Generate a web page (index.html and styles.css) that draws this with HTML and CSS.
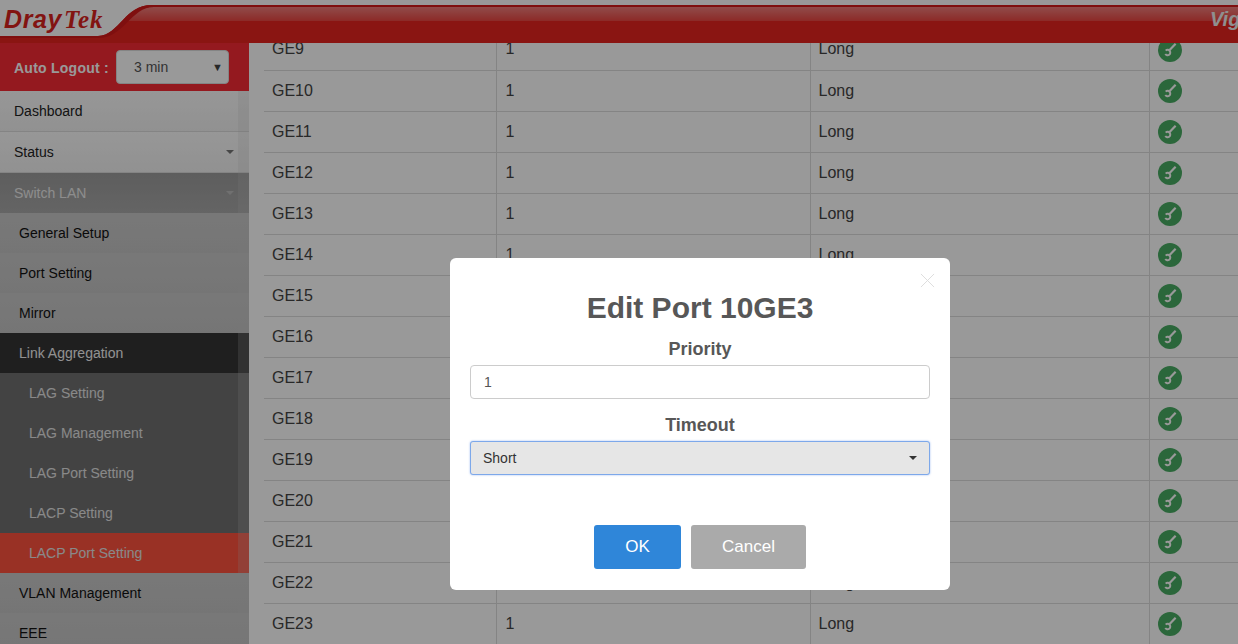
FILE: index.html
```html
<!DOCTYPE html>
<html lang="en">
<head>
<meta charset="utf-8">
<title>DrayTek Vigor</title>
<link rel="stylesheet" href="styles.css">
</head>
<body>
<svg class="defs" width="0" height="0" aria-hidden="true">
  <symbol id="wrench" viewBox="0 0 24 24">
    <circle cx="12" cy="12" r="12" fill="#49ac63"/>
    <path d="M17.600 5.800L11.400 12.200" stroke="#fff" stroke-width="2.200" fill="none"/>
    <path d="M7.700 12.600A2.700 2.700 0 1 1 7.300 16" stroke="#fff" stroke-width="2" fill="none"/>
  </symbol>
</svg>
<div class="app">
  <header class="topbar">
    <svg class="swoosh" viewBox="0 0 1238 43" preserveAspectRatio="none" aria-hidden="true">
      <defs>
        <linearGradient id="gloss" x1="0" y1="0" x2="0" y2="1">
          <stop offset="0" stop-color="#fff" stop-opacity=".42"/>
          <stop offset="1" stop-color="#fff" stop-opacity=".16"/>
        </linearGradient>
      </defs>
      <path d="M0 36H98C120 35 124 5 152 5H1238V43H0Z" fill="#e6231e"/>
      <path d="M126 21C134 14 140 7 154 7H1238V21Z" fill="url(#gloss)"/>
      <path d="M0 36H98C120 35 124 5 152 5H1238V7H154C131 7 124 38 98 38H0Z" fill="#d41a1a"/>
    </svg>
    <div class="logo"><span class="logo-dray">Dray</span><span class="logo-tek">Tek</span></div>
    <div class="model">Vig</div>
  </header>
  <div class="body">
    <nav class="sidebar">
      <div class="logout">
        <span class="logout-label">Auto Logout :</span>
        <div class="logout-select">
          <span>3 min</span>
          <span class="logout-arrow">▼</span>
        </div>
      </div>
      <div class="menu">
        <div class="menu-track"></div>
        <a class="item item-top">Dashboard</a>
        <a class="item item-top">Status<i class="caret"></i></a>
        <a class="item item-open">Switch LAN<i class="caret"></i></a>
        <a class="item item-sub">General Setup</a>
        <a class="item item-sub">Port Setting</a>
        <a class="item item-sub">Mirror</a>
        <a class="item item-sub item-group">Link Aggregation</a>
        <a class="item item-leaf">LAG Setting</a>
        <a class="item item-leaf">LAG Management</a>
        <a class="item item-leaf">LAG Port Setting</a>
        <a class="item item-leaf">LACP Setting</a>
        <a class="item item-leaf item-active">LACP Port Setting</a>
        <a class="item item-sub">VLAN Management</a>
        <a class="item item-sub">EEE</a>
      </div>
    </nav>
    <main class="content">
      <table class="ports">
        <colgroup>
          <col class="col-port"><col class="col-prio"><col class="col-time"><col class="col-edit">
        </colgroup>
        <tbody>
          <tr><td>GE9</td><td>1</td><td>Long</td><td><svg class="edit"><use href="#wrench"/></svg></td></tr>
          <tr><td>GE10</td><td>1</td><td>Long</td><td><svg class="edit"><use href="#wrench"/></svg></td></tr>
          <tr><td>GE11</td><td>1</td><td>Long</td><td><svg class="edit"><use href="#wrench"/></svg></td></tr>
          <tr><td>GE12</td><td>1</td><td>Long</td><td><svg class="edit"><use href="#wrench"/></svg></td></tr>
          <tr><td>GE13</td><td>1</td><td>Long</td><td><svg class="edit"><use href="#wrench"/></svg></td></tr>
          <tr><td>GE14</td><td>1</td><td>Long</td><td><svg class="edit"><use href="#wrench"/></svg></td></tr>
          <tr><td>GE15</td><td>1</td><td>Long</td><td><svg class="edit"><use href="#wrench"/></svg></td></tr>
          <tr><td>GE16</td><td>1</td><td>Long</td><td><svg class="edit"><use href="#wrench"/></svg></td></tr>
          <tr><td>GE17</td><td>1</td><td>Long</td><td><svg class="edit"><use href="#wrench"/></svg></td></tr>
          <tr><td>GE18</td><td>1</td><td>Long</td><td><svg class="edit"><use href="#wrench"/></svg></td></tr>
          <tr><td>GE19</td><td>1</td><td>Long</td><td><svg class="edit"><use href="#wrench"/></svg></td></tr>
          <tr><td>GE20</td><td>1</td><td>Long</td><td><svg class="edit"><use href="#wrench"/></svg></td></tr>
          <tr><td>GE21</td><td>1</td><td>Long</td><td><svg class="edit"><use href="#wrench"/></svg></td></tr>
          <tr><td>GE22</td><td>1</td><td>Long</td><td><svg class="edit"><use href="#wrench"/></svg></td></tr>
          <tr><td>GE23</td><td>1</td><td>Long</td><td><svg class="edit"><use href="#wrench"/></svg></td></tr>
        </tbody>
      </table>
    </main>
  </div>
</div>
<div class="overlay"></div>
<section class="modal">
  <svg class="modal-close" viewBox="0 0 16 16" aria-hidden="true"><path d="M1 1l14 14M15 1L1 15" stroke="#dcdcdc" stroke-width="1" fill="none"/></svg>
  <h2 class="modal-title">Edit Port 10GE3</h2>
  <label class="field-label" for="prio">Priority</label>
  <input class="field-input" id="prio" type="text" value="1">
  <label class="field-label field-label-second" for="timeout">Timeout</label>
  <div class="select-wrap">
    <select class="field-select" id="timeout">
      <option>Short</option>
      <option>Long</option>
    </select>
    <i class="select-caret"></i>
  </div>
  <div class="modal-actions">
    <button class="btn btn-ok" type="button">OK</button>
    <button class="btn btn-cancel" type="button">Cancel</button>
  </div>
</section>
</body>
</html>
```
FILE: styles.css
```css
* { box-sizing: border-box; }
html, body { margin: 0; height: 100%; overflow: hidden; }
body { font-family: "Liberation Sans", Arial, sans-serif; font-size: 14px; color: #333; background: #fff; }
.defs { position: absolute; }
.app { display: flex; flex-direction: column; height: 644px; }

.topbar { position: relative; display: flex; align-items: flex-start; flex: none; height: 43px; overflow: hidden; }
.swoosh { position: absolute; inset: 0; width: 100%; height: 43px; display: block; }
.logo { position: relative; padding: 5px 0 0 4px; font-size: 25px; line-height: 28px; color: #d9221d; font-style: italic; font-family: "Liberation Sans", sans-serif; white-space: nowrap; }
.logo-dray { font-weight: 700; letter-spacing: .6px; }
.logo-tek { font-family: "Liberation Serif", serif; font-weight: 700; margin-left: 2px; font-size: 25px; letter-spacing: 1px; }
.model { position: relative; flex: none; margin-left: auto; width: 28px; overflow: hidden; padding-top: 7px; font-size: 20px; line-height: 24px; font-weight: 700; font-style: italic; color: #eee; white-space: nowrap; }

.body { display: flex; flex: 1; min-height: 0; }
.sidebar { flex: none; width: 249px; display: flex; flex-direction: column; overflow: hidden; background: #c6c6c6; }
.logout { display: flex; align-items: flex-start; flex: none; height: 48px; padding: 7px 20px 0 14px; background: #f72a34; }
.logout-label { width: 102px; padding-top: 10px; font-weight: 700; color: #fff; letter-spacing: .25px; white-space: nowrap; }
.logout-select { display: flex; justify-content: space-between; align-items: center; width: 113px; height: 34px; padding: 0 5px 0 17px; background: #fff; border: 1px solid #ddd; border-radius: 4px; color: #555; }
.logout-arrow { font-size: 11px; color: #444; }

.menu { position: relative; flex: 1; }
.menu-track { position: absolute; top: 0; right: 0; bottom: 0; width: 11px; background: rgba(200,200,200,.22); }
.item { display: flex; align-items: center; justify-content: space-between; height: 40px; padding: 0 15px 0 14px; color: #222; white-space: nowrap; }
.item-top { height: 41px; border-bottom: 1px solid #dcdcdc; background: linear-gradient(#fcfcfc, #f2f2f2); }
.item-open { background: linear-gradient(#9c9c9c, #a8a8a8); color: #ececec; }
.item-sub { padding-left: 19px; background: linear-gradient(#c9c9c9, #c4c4c4); color: #111; }
.item-group { background: #343434; color: #f2f2f2; }
.item-leaf { padding-left: 29px; background: #707070; color: #e4e4e4; }
.item-active { background: #ff533f; }
.caret { width: 0; height: 0; border-left: 4.5px solid transparent; border-right: 4.5px solid transparent; border-top: 4px solid #777; }
.item-open .caret { border-top-color: #bbb; }

.content { flex: 1; min-width: 0; overflow: hidden; padding-left: 15px; }
.ports { table-layout: fixed; width: 988px; margin-top: -14px; border-collapse: collapse; font-size: 16px; color: #444; }
.col-port { width: 232px; }
.col-prio { width: 314px; }
.col-time { width: 339px; }
.col-edit { width: 103px; }
.ports td { height: 41px; padding: 0 8px; border-bottom: 1px solid #ddd; border-right: 1px solid #ddd; vertical-align: middle; }
.ports td:nth-child(2) { padding-left: 9px; }
.ports td:last-child { border-right: 0; padding-top: 1px; }
.edit { display: block; width: 24px; height: 24px; }

.overlay { position: fixed; inset: 0; background: rgba(0,0,0,.4); }
.modal { position: fixed; left: 450px; top: 258px; width: 500px; height: 332px; padding: 32px 20px 0; background: #fff; border-radius: 6px; text-align: center; color: #575757; }
.modal-close { position: absolute; top: 15px; right: 15px; width: 15px; height: 15px; }
.modal-title { margin: 0; font-size: 30px; line-height: 36px; font-weight: 700; }
.field-label { display: block; margin-top: 11px; font-size: 18px; line-height: 24px; font-weight: 700; }
.field-label-second { margin-top: 14px; }
.field-input { display: block; width: 100%; height: 34px; margin-top: 4px; padding: 0 13px; border: 1px solid #ccc; border-radius: 4px; font: 14px "Liberation Sans", sans-serif; color: #555; outline: 0; }
.select-wrap { position: relative; margin-top: 4px; }
.field-select { display: block; width: 100%; height: 34px; padding: 0 12px; appearance: none; background: #e6e6e6; border: 1px solid #7da8ea; border-radius: 3px; box-shadow: 0 0 2px rgba(102,150,233,.7); font: 14px "Liberation Sans", sans-serif; color: #333; outline: 0; }
.select-caret { position: absolute; right: 13px; top: 15px; width: 0; height: 0; border-left: 4.5px solid transparent; border-right: 4.5px solid transparent; border-top: 4px solid #333; }
.modal-actions { display: flex; justify-content: center; gap: 10px; margin-top: 50px; }
.btn { height: 44px; border: 0; border-radius: 3px; color: #fff; font: 17px "Liberation Sans", sans-serif; }
.btn-ok { width: 87px; background: #2f86d9; }
.btn-cancel { width: 115px; background: #aaa; }
```
